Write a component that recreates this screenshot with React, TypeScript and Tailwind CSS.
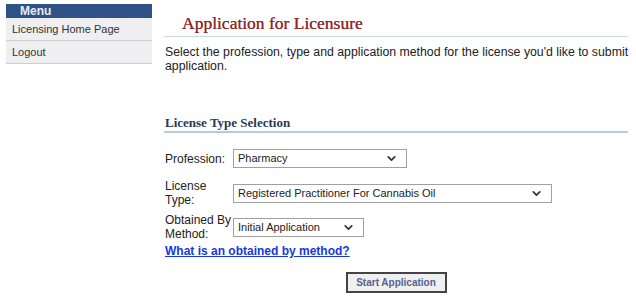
import {ChevronDown} from "lucide-react";

const Select = ({value, width}: {value: string; width: string}) => {
    return (
        <div
            className={`${width} h-[19px] flex items-center justify-between border border-[#a0a0a0] bg-white pl-[4px] pr-[8px] text-[11px] text-[#222]`}
        >
            <span>{value}</span>
            <ChevronDown size={13} strokeWidth={3.2} className="text-[#333]"/>
        </div>
    );
};

const App = () => {
    return (
        <div className="w-[636px] h-[299px] bg-white flex font-['Liberation_Sans',Arial,sans-serif]">
            {/* side menu */}
            <div className="ml-[6px] mt-[4px] w-[146px] shrink-0">
                <div className="h-[14px] bg-[#2f5185] text-[#e6ecf5] text-[12px] font-bold leading-[14px] pl-[14px]">
                    Menu
                </div>
                <div className="h-[23px] flex items-center bg-[#efeff1] border-b border-[#cfcfcf] pl-[6px] text-[11px] text-[#333]">
                    Licensing Home Page
                </div>
                <div className="h-[23px] flex items-center bg-[#efeff1] border-b border-[#cfcfcf] pl-[6px] text-[11px] text-[#333]">
                    Logout
                </div>
            </div>

            {/* main */}
            <div className="ml-[12px] w-[464px] flex flex-col">
                <h1 className="mt-[13px] pl-[18px] pb-[3px] border-b border-[#c9d7e6] font-['Liberation_Serif',serif] text-[17.5px] leading-[20px] text-[#8e2a2a] [text-shadow:0_0_0.4px_#8e2a2a]">
                    Application for Licensure
                </h1>
                <p className="mt-[8px] pl-[1px] w-[472px] text-[12.3px] leading-[14px] text-[#222]">
                    Select the profession, type and application method for the license you'd like to submit
                    application.
                </p>

                <h2 className="mt-[42px] pl-[1px] pb-[1px] border-b-2 border-[#b3cbe8] font-['Liberation_Serif',serif] font-bold text-[13px] leading-[15px] text-[#2b3856]">
                    License Type Selection
                </h2>

                <div className="mt-[16px] pl-[1px] flex flex-col gap-[11px] text-[12px] text-[#222]">
                    <div className="flex items-center">
                        <span className="w-[68px]">Profession:</span>
                        <Select value="Pharmacy" width="w-[174px]"/>
                    </div>
                    <div className="flex items-center">
                        <span className="w-[68px] leading-[14px]">License<br/>Type:</span>
                        <Select value="Registered Practitioner For Cannabis Oil" width="w-[319px]"/>
                    </div>
                </div>
                <div className="mt-[6px] pl-[1px] flex items-center text-[12px] text-[#222]">
                    <span className="w-[68px] leading-[14px]">Obtained By<br/>Method:</span>
                    <Select value="Initial Application" width="w-[131px]"/>
                </div>
                <a href="#" className="mt-[1px] pl-[1px] text-[12px] font-bold text-[#1538e0] underline">
                    What is an obtained by method?
                </a>
                <div className="mt-[12px] flex justify-center">
                    <button className="w-[101px] h-[21px] border-2 border-[#444] bg-[#f0f0f0] text-[10px] font-bold text-[#51658e]">
                        Start Application
                    </button>
                </div>
            </div>
        </div>
    );
};

export default App;
